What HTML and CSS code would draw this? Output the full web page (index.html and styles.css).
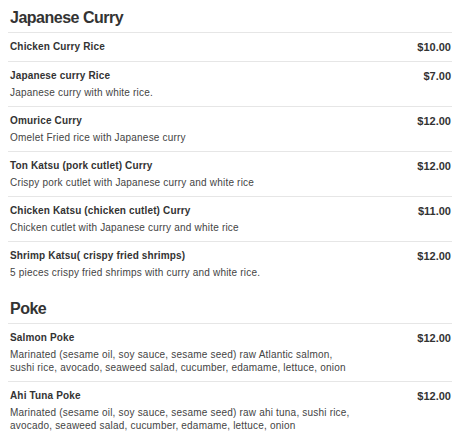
FILE: index.html
```html
<!DOCTYPE html>
<html>
<head>
<meta charset="utf-8">
<link rel="stylesheet" href="styles.css">
</head>
<body>
<div class="menu">
  <section class="section">
    <h2 class="section-title">Japanese Curry</h2>
    <div class="item">
      <div class="item-main"><div class="item-name">Chicken Curry Rice</div></div>
      <div class="item-price">$10.00</div>
    </div>
    <div class="item">
      <div class="item-main"><div class="item-name">Japanese curry Rice</div><div class="item-desc">Japanese curry with white rice.</div></div>
      <div class="item-price">$7.00</div>
    </div>
    <div class="item">
      <div class="item-main"><div class="item-name">Omurice Curry</div><div class="item-desc">Omelet Fried rice with Japanese curry</div></div>
      <div class="item-price">$12.00</div>
    </div>
    <div class="item">
      <div class="item-main"><div class="item-name">Ton Katsu (pork cutlet) Curry</div><div class="item-desc">Crispy pork cutlet with Japanese curry and white rice</div></div>
      <div class="item-price">$12.00</div>
    </div>
    <div class="item">
      <div class="item-main"><div class="item-name">Chicken Katsu (chicken cutlet) Curry</div><div class="item-desc">Chicken cutlet with Japanese curry and white rice</div></div>
      <div class="item-price">$11.00</div>
    </div>
    <div class="item last">
      <div class="item-main"><div class="item-name">Shrimp Katsu( crispy fried shrimps)</div><div class="item-desc">5 pieces crispy fried shrimps with curry and white rice.</div></div>
      <div class="item-price">$12.00</div>
    </div>
  </section>
  <section class="section">
    <h2 class="section-title">Poke</h2>
    <div class="item">
      <div class="item-main"><div class="item-name">Salmon Poke</div><div class="item-desc">Marinated (sesame oil, soy sauce, sesame seed) raw Atlantic salmon,<br>sushi rice, avocado, seaweed salad, cucumber, edamame, lettuce, onion</div></div>
      <div class="item-price">$12.00</div>
    </div>
    <div class="item last">
      <div class="item-main"><div class="item-name">Ahi Tuna Poke</div><div class="item-desc">Marinated (sesame oil, soy sauce, sesame seed) raw ahi tuna, sushi rice,<br>avocado, seaweed salad, cucumber, edamame, lettuce, onion</div></div>
      <div class="item-price">$12.00</div>
    </div>
  </section>
</div>
</body>
</html>
```
FILE: styles.css
```css
body {
  margin: 8px;
  background: #fff;
  font-family: "Liberation Sans", Arial, sans-serif;
  color: #333;
}
.menu {
  width: 444px;
  display: flex;
  flex-direction: column;
  gap: 13px;
}
.section-title {
  margin: 0;
  padding: 0 2px 4px;
  font-size: 16px;
  line-height: 20px;
  font-weight: bold;
  letter-spacing: -0.5px;
  color: #333;
  border-bottom: 1px solid #e6e6e6;
}
.item {
  display: flex;
  justify-content: space-between;
  align-items: flex-start;
  padding: 7px 1px 7px 2px;
  border-bottom: 1px solid #e6e6e6;
}
.item.last {
  border-bottom: none;
}
.item-name {
  font-size: 10px;
  line-height: 14px;
  font-weight: bold;
  letter-spacing: 0.15px;
  color: #333;
}
.item-desc {
  margin-top: 3px;
  font-size: 10px;
  line-height: 13px;
  letter-spacing: 0.2px;
  color: #444;
}
.item-price {
  font-size: 11px;
  line-height: 14px;
  font-weight: bold;
  color: #333;
}
```
